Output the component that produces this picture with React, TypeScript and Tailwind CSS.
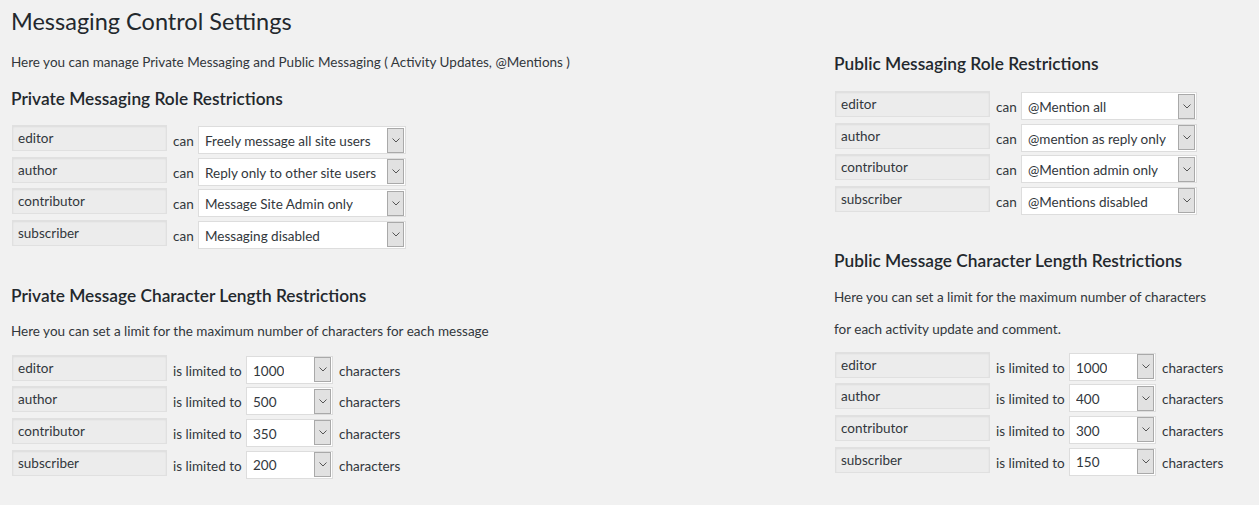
const font = { fontFamily: 'Lato, "Noto Sans", sans-serif' };

type RoleRow = { role: string; value: string };

function RoleLabel({ role }: { role: string }) {
  return (
    <div className="w-[155px] h-[26px] shrink-0 bg-[#ececec] border border-[#e0e0e0] shadow-[inset_0_1px_2px_rgba(0,0,0,0.07)] pl-[5px] pt-[3px] text-[13.5px] leading-[18px] text-[#32373c]">
      {role}
    </div>
  );
}

function Select({ value, width }: { value: string; width: string }) {
  return (
    <div className={`${width} h-[28px] mt-[1px] shrink-0 bg-white border border-[#dddddd] flex items-center justify-between pl-[6px] pr-[1px]`}>
      <span className="pt-[2px] text-[13.5px] text-[#32373c] whitespace-nowrap overflow-hidden">{value}</span>
      <span className="w-[17px] h-[25px] shrink-0 bg-[#e1e1e1] border border-[#a9a9a9] flex items-center justify-center">
        <svg width="8" height="5" viewBox="0 0 8 5" fill="none">
          <path d="M0.5 0.5 L4 4 L7.5 0.5" stroke="#555" strokeWidth="1" />
        </svg>
      </span>
    </div>
  );
}

function CanRow({ row, selectWidth }: { row: RoleRow; selectWidth: string }) {
  return (
    <div className="flex items-start h-[31.67px]">
      <RoleLabel role={row.role} />
      <span className="w-[25px] ml-[6px] shrink-0 pt-[7px] text-[13.5px] leading-[18px] text-[#32373c]">can</span>
      <Select value={row.value} width={selectWidth} />
    </div>
  );
}

function LimitRow({ row }: { row: RoleRow }) {
  return (
    <div className="flex items-start h-[31.67px]">
      <RoleLabel role={row.role} />
      <span className="w-[73px] ml-[6px] shrink-0 pt-[7px] text-[13.5px] leading-[18px] text-[#32373c] whitespace-nowrap">is limited to</span>
      <Select value={row.value} width="w-[87px]" />
      <span className="ml-[6px] pt-[7px] text-[13.5px] leading-[18px] text-[#32373c]">characters</span>
    </div>
  );
}

const privateRoles: RoleRow[] = [
  { role: 'editor', value: 'Freely message all site users' },
  { role: 'author', value: 'Reply only to other site users' },
  { role: 'contributor', value: 'Message Site Admin only' },
  { role: 'subscriber', value: 'Messaging disabled' },
];

const privateLimits: RoleRow[] = [
  { role: 'editor', value: '1000' },
  { role: 'author', value: '500' },
  { role: 'contributor', value: '350' },
  { role: 'subscriber', value: '200' },
];

const publicRoles: RoleRow[] = [
  { role: 'editor', value: '@Mention all' },
  { role: 'author', value: '@mention as reply only' },
  { role: 'contributor', value: '@Mention admin only' },
  { role: 'subscriber', value: '@Mentions disabled' },
];

const publicLimits: RoleRow[] = [
  { role: 'editor', value: '1000' },
  { role: 'author', value: '400' },
  { role: 'contributor', value: '300' },
  { role: 'subscriber', value: '150' },
];

export default function App() {
  return (
    <div className="w-[1259px] h-[505px] bg-[#f1f1f1] text-[#32373c] overflow-hidden flex pl-[11px]" style={font}>
      {/* Left column */}
      <div className="w-[823px] shrink-0">
        <h1 className="mt-[7px] text-[23.5px] leading-[29px] text-[#23282d]">Messaging Control Settings</h1>
        <p className="mt-[16px] text-[13.5px] leading-[20px]">
          Here you can manage Private Messaging and Public Messaging ( Activity Updates, @Mentions )
        </p>
        <h3 className="mt-[16px] text-[17.3px] leading-[22px] font-semibold text-[#23282d]">Private Messaging Role Restrictions</h3>
        <div className="mt-[15px] ml-[1px]">
          {privateRoles.map((r) => (
            <CanRow key={r.role} row={r} selectWidth="w-[208px]" />
          ))}
        </div>
        <h3 className="mt-[33px] text-[17.3px] leading-[22px] font-semibold text-[#23282d]">Private Message Character Length Restrictions</h3>
        <p className="mt-[14px] text-[13.5px] leading-[20px]">
          Here you can set a limit for the maximum number of characters for each message
        </p>
        <div className="mt-[14px] ml-[1px]">
          {privateLimits.map((r) => (
            <LimitRow key={r.role} row={r} />
          ))}
        </div>
      </div>

      {/* Right column */}
      <div className="flex-1">
        <h3 className="mt-[53px] text-[17.3px] leading-[22px] font-semibold text-[#23282d]">Public Messaging Role Restrictions</h3>
        <div className="mt-[16px] ml-[1px]">
          {publicRoles.map((r) => (
            <CanRow key={r.role} row={r} selectWidth="w-[176px]" />
          ))}
        </div>
        <h3 className="mt-[32px] text-[17.3px] leading-[22px] font-semibold text-[#23282d]">Public Message Character Length Restrictions</h3>
        <p className="mt-[9px] text-[13.5px] leading-[32px]">
          Here you can set a limit for the maximum number of characters
          <br />
          for each activity update and comment.
        </p>
        <div className="mt-[7px] ml-[1px]">
          {publicLimits.map((r) => (
            <LimitRow key={r.role} row={r} />
          ))}
        </div>
      </div>
    </div>
  );
}
